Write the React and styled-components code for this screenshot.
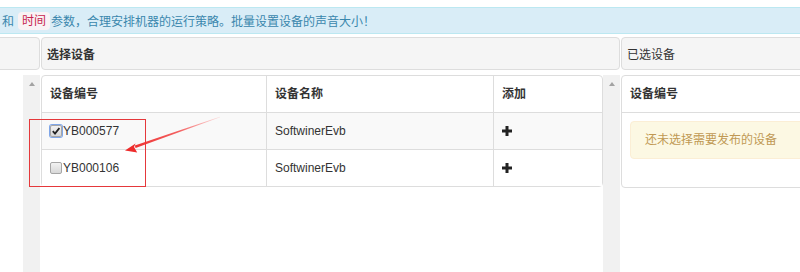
import React from "react";
import styled, { createGlobalStyle } from "styled-components";

const GlobalStyle = createGlobalStyle`
  html, body {
    margin: 0;
    padding: 0;
    background: #fff;
  }
  body {
    font-family: "Liberation Sans", "Noto Sans CJK SC", sans-serif;
    font-size: 12px;
    color: #333;
  }
`;

const Page = styled.div`
  position: relative;
  width: 800px;
  height: 272px;
  overflow: hidden;
`;

const InfoBar = styled.div`
  margin-top: 7px;
  height: 27px;
  box-sizing: border-box;
  display: flex;
  align-items: center;
  padding-left: 2px;
  background: #d9edf7;
  border-top: 1px solid #bce8f1;
  border-bottom: 1px solid #bce8f1;
  color: #3a87ad;
  white-space: nowrap;
`;

const Code = styled.code`
  font-family: inherit;
  font-size: 12px;
  line-height: 14px;
  padding: 2px 4px;
  margin: 0 1px 0 4px;
  border-radius: 4px;
  background: #f9f2f4;
  color: #c7254e;
`;

const Columns = styled.div`
  margin-top: 3px;
  display: grid;
  grid-template-columns: 40px 579px 1fr;
  grid-template-rows: 33px 197px;
  column-gap: 1px;
  row-gap: 5px;
`;

const Heading = styled.div`
  box-sizing: border-box;
  display: flex;
  align-items: center;
  padding-left: 5px;
  background: #f5f5f5;
  border: 1px solid #ddd;
  border-radius: 4px;
  font-weight: ${(p) => (p.$bold ? "bold" : "normal")};
  color: #333;
  margin-left: ${(p) => (p.$cut ? "-8px" : "0")};
  margin-right: ${(p) => (p.$open ? "-20px" : "0")};
`;

const Body = styled.div`
  display: flex;
  min-width: 0;
`;

const Pane = styled.div`
  flex: 1;
  min-width: 0;
`;

const Scrollbar = styled.div`
  width: 17px;
  flex: none;
  background: #f1f1f1;
  display: flex;
  justify-content: center;
  &::before {
    content: "";
    margin-top: 7px;
    width: 0;
    height: 0;
    border-left: 3.5px solid transparent;
    border-right: 3.5px solid transparent;
    border-bottom: 4px solid #a3a3a3;
  }
`;

const Table = styled.table`
  width: ${(p) => (p.$open ? "calc(100% + 20px)" : "100%")};
  table-layout: fixed;
  border-collapse: separate;
  border-spacing: 0;
  border: 1px solid #ddd;
  border-radius: 4px;
  font-size: 12px;
`;

const Th = styled.th`
  text-align: left;
  font-weight: bold;
  padding: 8px;
  line-height: 20px;
  width: ${(p) => p.$w || "auto"};
  border-left: ${(p) => (p.$first ? "none" : "1px solid #ddd")};
`;

const Tr = styled.tr`
  background: ${(p) => (p.$striped ? "#f9f9f9" : "#fff")};
`;

const Td = styled.td`
  padding: 8px;
  line-height: 20px;
  border-top: 1px solid #ddd;
  border-left: ${(p) => (p.$first ? "none" : "1px solid #ddd")};
  white-space: nowrap;
  vertical-align: middle;
`;

const Check = styled.span`
  display: inline-block;
  box-sizing: border-box;
  width: 12px;
  height: 12px;
  margin-right: 1px;
  vertical-align: -2px;
  border: 1px solid #a6a6a6;
  border-radius: 2px;
  background: linear-gradient(#f2f2f2, #d8d8d8);
  box-shadow: ${(p) => (p.$on ? "0 0 0 1px #7fa6e8" : "none")};
  position: relative;
`;

const Tick = styled.svg`
  position: absolute;
  left: 1px;
  top: 1px;
`;

const DeviceId = styled.span`
  font-size: 12px;
  color: #333;
`;

const Notice = styled.div`
  box-sizing: border-box;
  margin-bottom: 20px;
  padding: 8px 14px;
  line-height: 20px;
  background: #fcf8e3;
  border: 1px solid #fbeed5;
  border-radius: 4px;
  color: #c09853;
  font-weight: normal;
`;

const Frame = styled.div`
  position: absolute;
  left: 29px;
  top: 119px;
  width: 117px;
  height: 68px;
  box-sizing: border-box;
  border: 1px solid #e5383b;
  pointer-events: none;
`;

const Overlay = styled.svg`
  position: absolute;
  left: 0;
  top: 0;
  pointer-events: none;
`;

const Plus = () => (
  <svg width="10" height="10" viewBox="0 0 10 10" style={{ verticalAlign: "-1px" }}>
    <rect x="3.5" y="0" width="3" height="10" fill="#222" />
    <rect x="0" y="3.5" width="10" height="3" fill="#222" />
  </svg>
);

const devices = [
  { id: "YB000577", name: "SoftwinerEvb", checked: true },
  { id: "YB000106", name: "SoftwinerEvb", checked: false },
];

export default function App() {
  return (
    <Page>
      <GlobalStyle />
      <InfoBar>
        和<Code>时间</Code>参数，合理安排机器的运行策略。批量设置设备的声音大小！
      </InfoBar>
      <Columns>
        <Heading $cut />
        <Heading $bold>选择设备</Heading>
        <Heading $open>已选设备</Heading>

        <Body>
          <Pane />
          <Scrollbar />
        </Body>
        <Body>
          <Pane>
            <Table>
              <thead>
                <tr>
                  <Th $first $w="208px">设备编号</Th>
                  <Th $w="210px">设备名称</Th>
                  <Th>添加</Th>
                </tr>
              </thead>
              <tbody>
                {devices.map((d, i) => (
                  <Tr key={d.id} $striped={i % 2 === 0}>
                    <Td $first>
                      <Check $on={d.checked}>
                        {d.checked && (
                          <Tick width="8" height="8" viewBox="0 0 8 8">
                            <path d="M0.8 4.2 L3 6.6 L7.4 1" stroke="#222" strokeWidth="1.8" fill="none" />
                          </Tick>
                        )}
                      </Check>
                      <DeviceId>{d.id}</DeviceId>
                    </Td>
                    <Td>{d.name}</Td>
                    <Td>
                      <Plus />
                    </Td>
                  </Tr>
                ))}
              </tbody>
            </Table>
          </Pane>
          <Scrollbar />
        </Body>
        <Body>
          <Pane>
            <Table $open>
              <thead>
                <tr>
                  <Th $first>设备编号</Th>
                </tr>
              </thead>
              <tbody>
                <tr>
                  <Td $first>
                    <Notice>还未选择需要发布的设备</Notice>
                  </Td>
                </tr>
              </tbody>
            </Table>
          </Pane>
        </Body>
      </Columns>

      <Frame />
      <Overlay width="800" height="272" viewBox="0 0 800 272">
        <defs>
          <linearGradient id="arrowFade" gradientUnits="userSpaceOnUse" x1="220" y1="117" x2="130" y2="149">
            <stop offset="0" stopColor="#ff4d4d" stopOpacity="0.15" />
            <stop offset="0.45" stopColor="#f23b3b" stopOpacity="0.8" />
            <stop offset="1" stopColor="#ee2c2c" stopOpacity="1" />
          </linearGradient>
        </defs>
        <polygon
          points="220.1,117.3 219.9,116.7 134.8,145.6 135.6,148 "
          fill="url(#arrowFade)"
        />
        <polygon points="125,150.6 135.6,143.6 134,147 137.2,152.6" fill="#ee2c2c" />
      </Overlay>
    </Page>
  );
}
